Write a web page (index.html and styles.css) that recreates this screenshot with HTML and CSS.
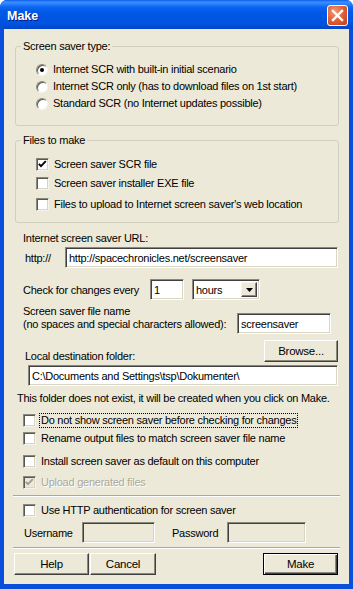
FILE: index.html
```html
<!DOCTYPE html>
<html>
<head>
<meta charset="utf-8">
<link rel="stylesheet" href="styles.css">
</head>
<body>
<div class="window">
  <div class="titlebar">
    <span class="title">Make</span>
    <span class="close"><svg width="13" height="13" viewBox="0 0 13 13"><path d="M2 2 L11 11 M11 2 L2 11" stroke="#fff" stroke-width="2.4" stroke-linecap="square"/></svg></span>
  </div>
  <div class="body">
    <div class="group g1">
      <div class="group-title">Screen saver type:</div>
      <div class="opts">
        <div class="opt"><span class="radio checked"><span class="dot"></span></span><span>Internet SCR with built-in initial scenario</span></div>
        <div class="opt"><span class="radio"></span><span>Internet SCR only (has to download files on 1st start)</span></div>
        <div class="opt"><span class="radio"></span><span>Standard SCR (no Internet updates possible)</span></div>
      </div>
    </div>
    <div class="group g2">
      <div class="group-title">Files to make</div>
      <div class="opts">
        <div class="opt r1"><span class="cb"><svg width="11" height="11" viewBox="0 0 11 11"><path d="M1.8 4.8 L4 7.2 L8.8 2.2" fill="none" stroke="#000" stroke-width="1.9"/></svg></span><span>Screen saver SCR file</span></div>
        <div class="opt r2"><span class="cb"></span><span>Screen saver installer EXE file</span></div>
        <div class="opt r3"><span class="cb"></span><span>Files to upload to Internet screen saver's web location</span></div>
      </div>
    </div>
    <div class="url-label">Internet screen saver URL:</div>
    <div class="url-row">
      <span class="http">http://</span>
      <div class="field url">http://spacechronicles.net/screensaver</div>
    </div>
    <div class="check-row">
      <span class="check-label">Check for changes every</span>
      <div class="field num">1</div>
      <div class="field select"><span class="sel-text">hours</span><span class="sel-btn"><svg width="7" height="4" viewBox="0 0 7 4"><path d="M0 0 H7 L3.5 4 Z" fill="#000"/></svg></span></div>
    </div>
    <div class="name-row">
      <div class="name-label">Screen saver file name<br>(no spaces and special characters allowed):</div>
      <div class="field name">screensaver</div>
    </div>
    <div class="browse-row">
      <span class="folder-label">Local destination folder:</span>
      <div class="btn browse">Browse...</div>
    </div>
    <div class="field path">C:\Documents and Settings\tsp\Dokumenter\</div>
    <div class="note">This folder does not exist, it will be created when you click on Make.</div>
    <div class="checks">
      <div class="opt c1"><span class="cb"></span><span class="focus">Do not show screen saver before checking for changes</span></div>
      <div class="opt c2"><span class="cb"></span><span class="txt">Rename output files to match screen saver file name</span></div>
      <div class="opt c3"><span class="cb"></span><span class="txt">Install screen saver as default on this computer</span></div>
      <div class="opt c4 disabled"><span class="cb off"><svg width="11" height="11" viewBox="0 0 11 11"><path d="M1.8 4.8 L4 7.2 L8.8 2.2" fill="none" stroke="#a19f94" stroke-width="1.9"/></svg></span><span class="txt">Upload generated files</span></div>
    </div>
    <div class="sep s1"></div>
    <div class="checks auth">
      <div class="opt"><span class="cb"></span><span class="txt">Use HTTP authentication for screen saver</span></div>
    </div>
    <div class="cred-row">
      <span class="user-label">Username</span>
      <div class="field user off"></div>
      <span class="pass-label">Password</span>
      <div class="field pass off"></div>
    </div>
    <div class="sep s2"></div>
    <div class="buttons">
      <div class="btn help">Help</div>
      <div class="btn cancel">Cancel</div>
      <div class="btn make">Make</div>
    </div>
  </div>
</div>
</body>
</html>
```

FILE: styles.css
```css
* { box-sizing: border-box; }
html, body { margin: 0; padding: 0; background: #fff; }
body {
  font-family: "Liberation Sans", Arial, sans-serif;
  font-size: 11px;
  letter-spacing: -0.25px;
  color: #000;
}
.window {
  width: 353px;
  height: 589px;
  background: #0a4fdc;
  border-radius: 7px 7px 0 0;
  display: flex;
  flex-direction: column;
  overflow: hidden;
}
.titlebar {
  height: 29px;
  flex: none;
  display: flex;
  align-items: center;
  justify-content: space-between;
  padding: 2px 5px 0 7px;
  background: linear-gradient(to bottom, #0a5ce8 0px, #3d8fff 2px, #2a82fb 4px, #0d66f0 7px, #0059e8 12px, #0056e4 18px, #0053de 24px, #004bd0 27px, #0046c8 29px);
}
.title {
  color: #fff;
  font-weight: bold;
  font-size: 12.5px;
  letter-spacing: 0;
  text-shadow: 1px 1px #0a1883;
}
.close {
  width: 21px;
  height: 21px;
  border: 1px solid #fff;
  border-radius: 3px;
  background: radial-gradient(circle at 35% 30%, #f09a7e 0%, #e0643d 45%, #cc4a22 80%, #c0401c 100%);
  display: flex;
  align-items: center;
  justify-content: center;
}
.body {
  flex: 1;
  margin: 0 4px 5px 4px;
  background: #ece9d8;
  display: flex;
  flex-direction: column;
}
.group {
  border: 1px solid #d0d0bf;
  border-radius: 3px;
  margin: 0 10px 0 11px;
}
.g1 { margin-top: 17px; padding-bottom: 13px; }
.g2 { margin-top: 14px; padding-bottom: 9px; }
.group-title {
  margin: -7px 0 0 5px;
  padding: 0 2px;
  background: #ece9d8;
  line-height: 13px;
  width: fit-content;
}
.opts { padding-left: 20px; }
.g1 .opts { margin-top: 8px; }
.opt {
  display: flex;
  align-items: center;
  height: 17px;
  line-height: 13px;
  white-space: nowrap;
}
.g2 .r1 { margin-top: 9px; }
.g2 .r2 { margin-top: 2px; }
.g2 .r3 { margin-top: 4px; }
.radio {
  width: 12px;
  height: 12px;
  margin-right: 5px;
  border-radius: 50%;
  background: #fff;
  border: 1px solid;
  border-color: #8a887c #f4f3ee #f4f3ee #8a887c;
  box-shadow: inset 1px 1px #5a5950;
  display: flex;
  align-items: center;
  justify-content: center;
  flex: none;
}
.dot {
  width: 4px;
  height: 4px;
  border-radius: 50%;
  background: #000;
}
.cb {
  width: 13px;
  height: 13px;
  margin-right: 5px;
  background: #fff;
  border: 1px solid;
  border-color: #8a887c #f4f3ee #f4f3ee #8a887c;
  box-shadow: inset 1px 1px #5a5950, inset -1px -1px #d8d5c6;
  display: flex;
  align-items: center;
  justify-content: center;
  flex: none;
}
.cb.off { background: #ece9d8; }
.url-label {
  margin: 9px 0 0 19px;
  line-height: 13px;
}
.field {
  height: 21px;
  background: #fff;
  border: 1px solid;
  border-color: #8a887c #fff #fff #8a887c;
  box-shadow: inset 1px 1px #404040, inset -1px -1px #d8d5c6;
  padding: 3px 3px 0 3px;
  line-height: 14px;
  white-space: nowrap;
  overflow: hidden;
  flex: none;
}
.field.off { background: #ece9d8; }
.url-row {
  margin-top: 2px;
  display: flex;
  align-items: center;
  padding-left: 21px;
}
.http { width: 40px; }
.url { width: 273px; }
.check-row {
  margin-top: 11px;
  display: flex;
  align-items: center;
  padding-left: 19px;
}
.check-label { width: 127px; }
.num { width: 34px; }
.select {
  width: 68px;
  margin-left: 8px;
  display: flex;
  justify-content: space-between;
  padding: 2px 2px 2px 3px;
}
.sel-text { line-height: 15px; padding-top: 1px; }
.sel-btn {
  width: 16px;
  height: 15px;
  background: #ece9d8;
  border: 1px solid;
  border-color: #f4f3ee #404040 #404040 #f4f3ee;
  box-shadow: inset -1px -1px #8a887c;
  display: flex;
  align-items: center;
  justify-content: center;
}
.name-row {
  margin-top: 5px;
  display: flex;
  align-items: flex-end;
  padding-left: 19px;
}
.name-label {
  width: 214px;
  line-height: 13px;
  padding-bottom: 3px;
}
.name { width: 94px; }
.browse-row {
  margin-top: 6px;
  display: flex;
  align-items: flex-end;
  justify-content: space-between;
  padding: 0 11px 0 21px;
}
.folder-label { line-height: 13px; margin-bottom: -1px; }
.btn {
  height: 22px;
  background: #ece9d8;
  border: 1px solid;
  border-color: #fff #404040 #404040 #fff;
  box-shadow: inset -1px -1px #8a887c;
  display: flex;
  align-items: center;
  justify-content: center;
  font-size: 11.5px;
  flex: none;
}
.browse { width: 74px; }
.path {
  margin: 3px 11px 0 24px;
}
.note {
  margin: 6px 0 0 13px;
  line-height: 13px;
  white-space: nowrap;
}
.checks { padding-left: 19px; }
.checks .cb { margin-right: 4px; }
.focus, .txt { padding: 0 1px; line-height: 13px; }
.focus { outline: 1px dotted #000; outline-offset: 0; }
.c1 { margin-top: 7px; }
.c2 { margin-top: 1px; }
.c3 { margin-top: 6px; }
.c4 { margin-top: 4px; }
.disabled .txt { color: #aca899; text-shadow: 1px 1px #fff; }
.sep {
  height: 2px;
  margin: 0 9px;
  border-top: 1px solid #aca899;
  border-bottom: 1px solid #fff;
}
.s1 { margin-top: 4px; }
.auth { margin-top: 5px; }
.cred-row {
  margin-top: 3px;
  display: flex;
  align-items: center;
  padding-left: 20px;
}
.user-label { width: 58px; }
.user { width: 73px; }
.pass-label { width: 55px; margin-left: 17px; }
.pass { width: 79px; }
.s2 { margin-top: 4px; }
.buttons {
  margin-top: 4px;
  display: flex;
  padding: 0 11px 0 10px;
}
.help { width: 75px; }
.cancel { width: 66px; margin-left: 1px; }
.make {
  width: 75px;
  margin-left: auto;
  border: 1px solid #000;
  box-shadow: inset 1px 1px #fff, inset -1px -1px #404040, inset -2px -2px #8a887c;
}
```
